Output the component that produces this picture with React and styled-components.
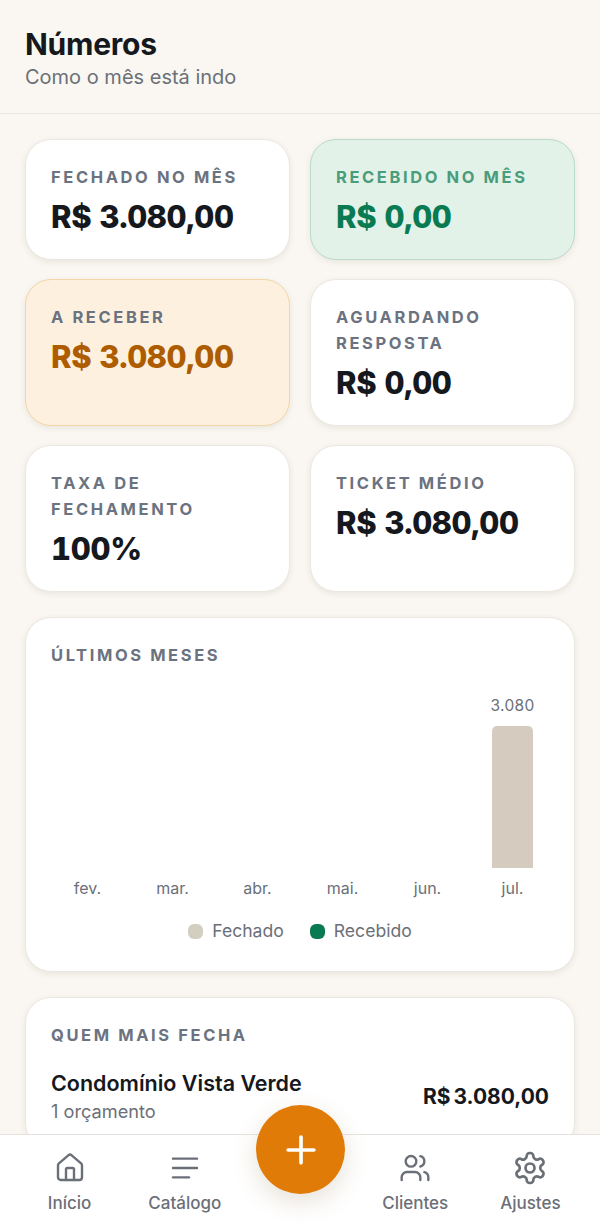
import styled, { createGlobalStyle } from "styled-components";

const GlobalStyle = createGlobalStyle`
  html, body { margin: 0; padding: 0; height: 100%; overflow: hidden; }
  body { background: #faf7f2; font-family: Inter, "Liberation Sans", sans-serif; }
  * { box-sizing: border-box; }
`;

const Screen = styled.div`
  position: relative;
  width: 600px;
  height: 1231px;
  overflow: hidden;
  background: #faf7f2;
`;

const Header = styled.header`
  height: 114px;
  padding: 25px 25px 0;
  border-bottom: 1px solid #ece8e1;
`;

const Title = styled.h1`
  margin: 0;
  font-size: 30px;
  line-height: 38px;
  font-weight: 700;
  letter-spacing: -0.25px;
  color: #15181d;
`;

const Subtitle = styled.p`
  margin: 0;
  font-size: 20px;
  line-height: 29px;
  color: #6b7078;
`;

const Content = styled.main`
  padding: 25px 25px 0;
  display: flex;
  flex-direction: column;
  gap: 25px;
`;

const Grid = styled.div`
  display: grid;
  grid-template-columns: 1fr 1fr;
  gap: 19px 20px;
  align-items: start;
`;

const tones = {
  plain: { bg: "#ffffff", border: "#ece8e1", label: "#6b7280", value: "#15181d" },
  green: { bg: "#e2f2e9", border: "#b9dbc9", label: "#4b9c7a", value: "#0a7a52" },
  orange: { bg: "#fef0df", border: "#f3d5a6", label: "#6b7280", value: "#ad5c00" },
};

const Card = styled.section`
  min-height: ${(p) => p.$minH || 0}px;
  padding: 24px 25px;
  border-radius: 26px;
  background: ${(p) => tones[p.$tone || "plain"].bg};
  border: 1px solid ${(p) => tones[p.$tone || "plain"].border};
  box-shadow: 0 2px 6px rgba(60, 50, 30, 0.09);
`;

const Label = styled.div`
  font-size: 16.5px;
  line-height: 26px;
  font-weight: 700;
  letter-spacing: 2.6px;
  color: ${(p) => tones[p.$tone || "plain"].label};
`;

const Value = styled.div`
  margin-top: 9px;
  font-size: 31px;
  line-height: 36px;
  font-weight: 800;
  letter-spacing: -0.3px;
  word-spacing: 0;
  font-variant-numeric: tabular-nums;
  color: ${(p) => tones[p.$tone || "plain"].value};
`;

const Chart = styled.div`
  margin-top: 15px;
  height: 216px;
  display: grid;
  grid-template-columns: repeat(6, 85px);
  justify-content: center;
`;

const Col = styled.div`
  display: flex;
  flex-direction: column;
  align-items: center;
  justify-content: flex-end;
`;

const BarValue = styled.div`
  font-size: 15.5px;
  line-height: 20px;
  margin-bottom: 10px;
  letter-spacing: 0.3px;
  color: #6b7078;
`;

const Bar = styled.div`
  width: 41px;
  border-radius: 5px 5px 0 0;
  background: #d5ccbf;
`;

const Month = styled.div`
  margin-top: 9px;
  font-size: 16px;
  line-height: 22px;
  color: #6b7078;
`;

const Legend = styled.div`
  margin-top: 20px;
  display: flex;
  justify-content: center;
  gap: 26px;
`;

const LegendItem = styled.div`
  display: flex;
  align-items: center;
  gap: 9px;
  font-size: 17.6px;
  line-height: 24px;
  color: #6b7078;
`;

const Swatch = styled.span`
  width: 15px;
  height: 15px;
  border-radius: 6px;
  background: ${(p) => p.$color};
`;

const ClientRow = styled.div`
  margin-top: 21px;
  display: flex;
  align-items: center;
  justify-content: space-between;
`;

const ClientName = styled.div`
  font-size: 21.5px;
  line-height: 29px;
  font-weight: 600;
  color: #15181d;
`;

const ClientMeta = styled.div`
  font-size: 18.2px;
  line-height: 26px;
  color: #6b7078;
`;

const ClientTotal = styled.div`
  font-size: 21px;
  font-weight: 700;
  word-spacing: -2px;
  color: #15181d;
`;

const Nav = styled.nav`
  position: absolute;
  left: 0;
  right: 0;
  bottom: 0;
  height: 97px;
  padding: 0 12px;
  background: #fff;
  border-top: 1px solid #e6e3de;
  display: grid;
  grid-template-columns: repeat(5, 1fr);
`;

const NavItem = styled.div`
  padding-top: 17px;
  display: flex;
  flex-direction: column;
  align-items: center;
  gap: 8px;
  font-size: 17px;
  line-height: 22px;
  font-weight: 500;
  color: #6b7078;
`;

const IconSlot = styled.span`
  height: 32px;
  display: flex;
  align-items: center;
  justify-content: center;
  svg { display: block; flex: none; }
`;

const Fab = styled.button`
  position: absolute;
  left: 256px;
  top: 1105px;
  width: 89px;
  height: 89px;
  padding: 0;
  border: 0;
  border-radius: 50%;
  background: #e07b07;
  color: #fff;
  display: flex;
  align-items: center;
  justify-content: center;
  box-shadow: 0 8px 24px rgba(120, 90, 40, 0.18);
`;

const Icon = ({ children, size = 32, weight = 1.8 }) => (
  <svg width={size} height={size} viewBox="0 0 24 24" fill="none" stroke="currentColor" strokeWidth={weight} strokeLinecap="round" strokeLinejoin="round">
    {children}
  </svg>
);

const months = [
  { name: "fev." },
  { name: "mar." },
  { name: "abr." },
  { name: "mai." },
  { name: "jun." },
  { name: "jul.", total: "3.080", height: 142 },
];

const App = () => (
  <Screen>
    <GlobalStyle />
    <Header>
      <Title>Números</Title>
      <Subtitle>Como o mês está indo</Subtitle>
    </Header>
    <Content>
      <Grid>
        <Card>
          <Label>FECHADO NO MÊS</Label>
          <Value>R$ 3.080,00</Value>
        </Card>
        <Card $tone="green">
          <Label $tone="green">RECEBIDO NO MÊS</Label>
          <Value $tone="green">R$ 0,00</Value>
        </Card>
        <Card $tone="orange" $minH={147}>
          <Label $tone="orange">A RECEBER</Label>
          <Value $tone="orange">R$ 3.080,00</Value>
        </Card>
        <Card>
          <Label>AGUARDANDO RESPOSTA</Label>
          <Value>R$ 0,00</Value>
        </Card>
        <Card>
          <Label>TAXA DE FECHAMENTO</Label>
          <Value>100%</Value>
        </Card>
        <Card $minH={147}>
          <Label>TICKET MÉDIO</Label>
          <Value>R$ 3.080,00</Value>
        </Card>
      </Grid>
      <Card $minH={355}>
        <Label>ÚLTIMOS MESES</Label>
        <Chart>
          {months.map((m) => (
            <Col key={m.name}>
              {m.total && <BarValue>{m.total}</BarValue>}
              {m.height && <Bar style={{ height: m.height }} />}
              <Month>{m.name}</Month>
            </Col>
          ))}
        </Chart>
        <Legend>
          <LegendItem><Swatch $color="#d3cfc0" />Fechado</LegendItem>
          <LegendItem><Swatch $color="#0a7a52" />Recebido</LegendItem>
        </Legend>
      </Card>
      <Card>
        <Label>QUEM MAIS FECHA</Label>
        <ClientRow>
          <div>
            <ClientName>Condomínio Vista Verde</ClientName>
            <ClientMeta>1 orçamento</ClientMeta>
          </div>
          <ClientTotal>R$ 3.080,00</ClientTotal>
        </ClientRow>
      </Card>
    </Content>
    <Nav>
      <NavItem>
        <IconSlot>
          <Icon>
            <path d="M15 21v-8a1 1 0 0 0-1-1h-4a1 1 0 0 0-1 1v8" />
            <path d="M3 10a2 2 0 0 1 .709-1.528l7-5.999a2 2 0 0 1 2.582 0l7 5.999A2 2 0 0 1 21 10v9a2 2 0 0 1-2 2H5a2 2 0 0 1-2-2z" />
          </Icon>
        </IconSlot>
        Início
      </NavItem>
      <NavItem>
        <IconSlot>
          <Icon>
            <path d="M3 5h18" />
            <path d="M3 12h18" />
            <path d="M3 19h12" />
          </Icon>
        </IconSlot>
        Catálogo
      </NavItem>
      <div />
      <NavItem>
        <IconSlot>
          <Icon>
            <path d="M16 21v-2a4 4 0 0 0-4-4H6a4 4 0 0 0-4 4v2" />
            <circle cx="9" cy="7" r="4" />
            <path d="M22 21v-2a4 4 0 0 0-3-3.87" />
            <path d="M16 3.13a4 4 0 0 1 0 7.75" />
          </Icon>
        </IconSlot>
        Clientes
      </NavItem>
      <NavItem>
        <IconSlot>
          <Icon size={36}>
            <path d="M12.22 2h-.44a2 2 0 0 0-2 2v.18a2 2 0 0 1-1 1.73l-.43.25a2 2 0 0 1-2 0l-.15-.08a2 2 0 0 0-2.73.73l-.22.38a2 2 0 0 0 .73 2.73l.15.1a2 2 0 0 1 1 1.72v.51a2 2 0 0 1-1 1.74l-.15.09a2 2 0 0 0-.73 2.73l.22.38a2 2 0 0 0 2.73.73l.15-.08a2 2 0 0 1 2 0l.43.25a2 2 0 0 1 1 1.73V20a2 2 0 0 0 2 2h.44a2 2 0 0 0 2-2v-.18a2 2 0 0 1 1-1.73l.43-.25a2 2 0 0 1 2 0l.15.08a2 2 0 0 0 2.73-.73l.22-.39a2 2 0 0 0-.73-2.73l-.15-.08a2 2 0 0 1-1-1.74v-.5a2 2 0 0 1 1-1.74l.15-.09a2 2 0 0 0 .73-2.73l-.22-.38a2 2 0 0 0-2.73-.73l-.15.08a2 2 0 0 1-2 0l-.43-.25a2 2 0 0 1-1-1.73V4a2 2 0 0 0-2-2z" />
            <circle cx="12" cy="12" r="3" />
          </Icon>
        </IconSlot>
        Ajustes
      </NavItem>
    </Nav>
    <Fab aria-label="Novo">
      <Icon size={44} weight={2}>
        <path d="M5 12h14" />
        <path d="M12 5v14" />
      </Icon>
    </Fab>
  </Screen>
);

export default App;
